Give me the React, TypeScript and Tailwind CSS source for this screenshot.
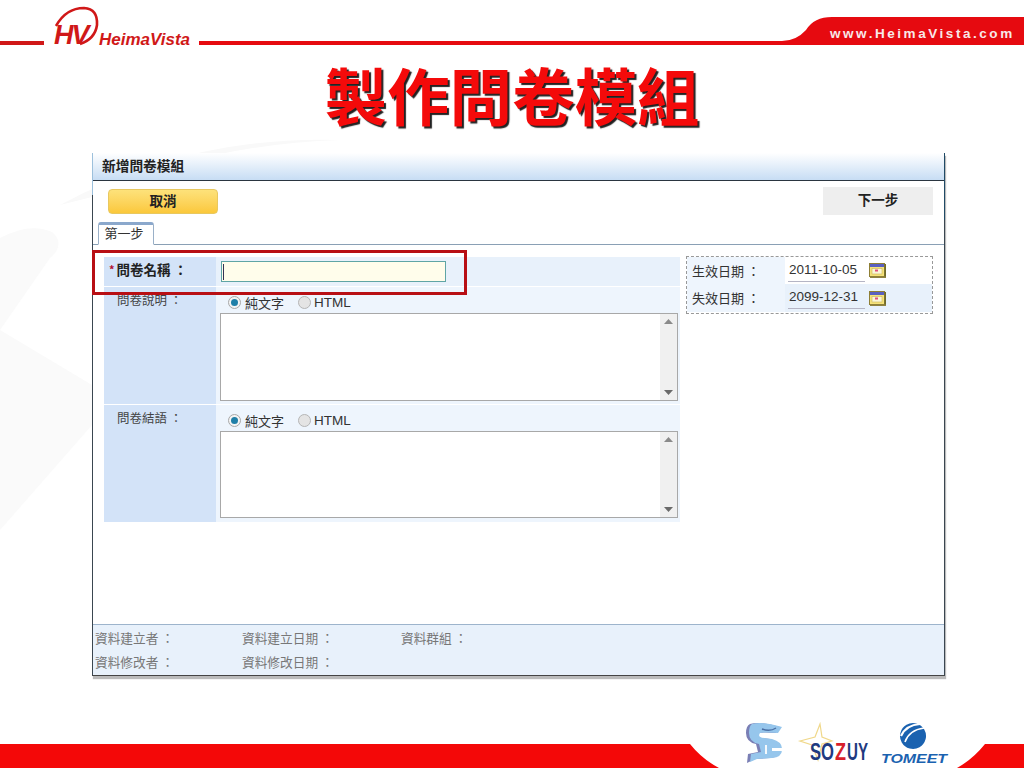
const cjk = "font-['Noto_Sans_CJK_TC','Liberation_Sans',sans-serif]";

function Radio({ on }: { on?: boolean }) {
  return (
    <span className={`flex h-[13px] w-[13px] items-center justify-center rounded-full border ${on ? "border-[#a8a8a8] bg-[#f4f4f4]" : "border-[#b5b5b5] bg-[#e4e4e4]"}`}>
      {on && <span className="h-[7px] w-[7px] rounded-full bg-[#1f7fa8]" />}
    </span>
  );
}

function RadioLine() {
  return (
    <div className="flex h-[26px] items-center pl-[12px] pt-[4px] leading-none text-[#333]">
      <Radio on />
      <span className="ml-[4px] text-[13px] leading-none">純文字</span>
      <span className="ml-[14px]"><Radio /></span>
      <span className="ml-[3px] pt-[2px] font-['Liberation_Sans',sans-serif] text-[13.5px]">HTML</span>
    </div>
  );
}

function TextBox({ h }: { h: string }) {
  return (
    <div className={`ml-[4px] flex w-[458px] border border-[#a8a8a8] bg-white ${h}`}>
      <div className="flex-1" />
      <div className="flex w-[17px] flex-col items-center justify-between bg-[#f0f0f0] py-[5px]">
        <svg width="9" height="5" viewBox="0 0 9 5"><path d="M0 5 L4.5 0 L9 5Z" fill="#8a8a8a" /></svg>
        <svg width="9" height="5" viewBox="0 0 9 5"><path d="M0 0 L4.5 5 L9 0Z" fill="#6a6a6a" /></svg>
      </div>
    </div>
  );
}

function CalendarIcon() {
  return (
    <svg width="17" height="15" viewBox="0 0 17 15" className="ml-[4px]">
      <rect x="0.5" y="0.5" width="15" height="13" fill="#f5e27a" stroke="#8f7f35" />
      <rect x="1" y="1" width="14" height="3" fill="#5a5fc0" />
      <rect x="3" y="5.5" width="10" height="5.5" fill="#fbf6d8" stroke="#c9b45a" strokeWidth="0.6" />
      <rect x="6" y="6.5" width="3" height="2" fill="#e0507a" />
      <rect x="15.5" y="1" width="1.5" height="14" fill="#6f6a2a" />
      <rect x="1" y="13.5" width="16" height="1.5" fill="#8f8240" />
    </svg>
  );
}

function DateRow({ label, value, alt }: { label: string; value: string; alt?: boolean }) {
  return (
    <div className={`flex items-center ${alt ? "h-[28px] bg-[#e8f1fb]" : "h-[27px] bg-white"}`}>
      <div className="flex h-full w-[98px] items-center bg-[#eef5fd] pl-[5px] text-[13px] text-[#333]">
        {label}
      </div>
      <div className="ml-[3px] flex h-[22px] w-[77px] items-center border-b border-[#b5b5c5] pl-[1px] font-['Liberation_Sans',sans-serif] text-[13.5px] text-[#333]">
        {value}
      </div>
      <CalendarIcon />
    </div>
  );
}

export default function App() {
  return (
    <div className={`relative flex h-[768px] w-[1024px] flex-col overflow-hidden bg-white ${cjk}`}>
      {/* faint watermark behind the slide */}
      <svg className="absolute left-0 top-0" width="1024" height="768" viewBox="0 0 1024 768">
        <path d="M60 205 Q190 135 340 140 Q200 145 100 195Z" fill="#f9f9f9" />
        <path d="M0 238 Q30 222 52 232 Q66 244 50 258 L0 330 L92 385 V425 L0 530Z" fill="#fafafa" />
      </svg>

      {/* header band */}
      <svg className="relative -mb-[6px] shrink-0" width="1024" height="52" viewBox="0 0 1024 52">
        <rect x="0" y="41" width="44" height="4" fill="#d01818" />
        <path d="M199 41 H782 Q796 41 806 30 Q814 17 832 17 H1024 V45 H199Z" fill="#e60a10" />
        <path d="M56 26 Q66 8 84 8 Q98 9 97 25 Q95 39 80 44" fill="none" stroke="#d01818" strokeWidth="2.6" />
        <text x="54" y="44" fontFamily="Liberation Sans" fontWeight="700" fontStyle="italic" fontSize="27" fill="#d01818" letterSpacing="-2">HV</text>
        <text x="99" y="44.5" fontFamily="Liberation Sans" fontWeight="700" fontStyle="italic" fontSize="17" fill="#d01818">HeimaVista</text>
        <text x="830" y="38" fontFamily="Liberation Sans" fontWeight="700" fontSize="13.5" fill="#f8e8e8" letterSpacing="2.55">www.HeimaVista.com</text>
      </svg>

      {/* title */}
      <div className="relative flex h-[107px] shrink-0 items-start justify-center pt-[11px]">
        <h1 className="text-[62.5px] font-bold leading-[74px] text-[#f40a0a] [text-shadow:2px_2px_1px_#222]">
          製作問卷模組
        </h1>
      </div>

      {/* dialog */}
      <div className="relative ml-[92px] flex h-[523px] w-[853px] shrink-0 flex-col border-x border-b border-x-[#3a4650] border-b-[#444] bg-white shadow-[1px_3px_1px_#bbb]">
        <div className="flex h-[28px] shrink-0 items-center border-b border-[#2a3540] bg-gradient-to-b from-white to-[#c7ddf4] pb-[3px] pl-[9px] text-[13.7px] font-bold text-[#222]">
          新增問卷模組
        </div>

        <div className="flex h-[41px] shrink-0 items-start justify-between pl-[15px] pr-[11px] pt-[6px]">
          <button className="mt-[2px] h-[25px] w-[110px] rounded-[4px] border border-[#e8c860] bg-gradient-to-b from-[#fde27a] to-[#fbc83a] pb-[3px] text-[13.5px] font-bold text-[#222]">
            取消
          </button>
          <button className="h-[28px] w-[110px] bg-[#eeeeee] pb-[3px] text-[13.5px] font-bold text-[#222]">下一步</button>
        </div>

        <div className="flex h-[23px] shrink-0 border-b border-[#8aa0b5] pl-[5px]">
          <div className="flex h-[23px] w-[56px] items-center justify-center rounded-t-[3px] border-x border-b border-t-[3px] border-x-[#9ab0c8] border-b-white border-t-[#8ba8cc] bg-white pb-[3px] pr-[4px] text-[13px] text-[#333]">
            第一步
          </div>
        </div>

        <div className="flex flex-1 gap-[6px] pl-[11px] pr-[11px] pt-[12px]">
          <div className="flex w-[576px] shrink-0 flex-col gap-[1px]">
            <div className="flex h-[29px]">
              <div className="flex w-[112px] items-center bg-[#d3e3f8] pb-[4px] pl-[5px] text-[13.5px] font-bold text-[#222]">
                <span className="mr-[2px] text-[11px] text-[#b01030]">*</span>
                問卷名稱 ：
              </div>
              <div className="flex flex-1 items-center bg-[#e8f1fb] pl-[5px]">
                <div className="flex h-[21px] w-[225px] items-center border border-[#5fa5a5] bg-[#fffdeb] pl-[1px]">
                  <span className="h-[16px] w-[1px] bg-[#335]" />
                </div>
              </div>
            </div>
            {[0, 1].map((i) => (
              <div key={i} className="flex h-[117px]">
                <div className="w-[112px] bg-[#d3e3f8] pl-[13px] pt-[4px] text-[12.5px] text-[#444]">
                  {i === 0 ? "問卷說明 ：" : "問卷結語 ："}
                </div>
                <div className="flex-1 bg-[#eef5fd]">
                  <RadioLine />
                  <TextBox h={i === 0 ? "h-[88px]" : "h-[87px]"} />
                </div>
              </div>
            ))}
          </div>

          <div className="-mt-[1px] h-[58px] w-[248px] self-start border border-dashed border-[#999] bg-white">
            <DateRow label="生效日期 ：" value="2011-10-05" />
            <DateRow label="失效日期 ：" value="2099-12-31" alt />
          </div>
        </div>

        <div className="flex h-[51px] shrink-0 flex-col justify-center gap-[5px] border-t border-[#9db4cc] bg-[#e8f1fb] pb-[2px] pl-[2px] text-[12.7px] leading-[19px] text-[#777]">
          <div className="flex">
            <span className="w-[147px]">資料建立者 ：</span>
            <span className="w-[159px]">資料建立日期 ：</span>
            <span>資料群組 ：</span>
          </div>
          <div className="flex">
            <span className="w-[147px]">資料修改者 ：</span>
            <span>資料修改日期 ：</span>
          </div>
        </div>

        {/* edge tints of the window behind, and the red highlight */}
        <div className="absolute -left-[1px] top-0 h-[42px] w-[1px] bg-[#9cc0dc]" />
        <div className="absolute -right-[1px] top-0 h-[67px] w-[1px] bg-[#1f4a66]" />
        <div className="absolute -left-[1px] top-[97px] h-[45px] w-[375px] border-[3px] border-[#b80f14]" />
      </div>

      {/* footer band with partner logos */}
      <svg className="mt-auto shrink-0" width="1024" height="46" viewBox="0 0 1024 46">
        <path d="M0 22 H690 Q702 37 719 46 H0Z" fill="#f40808" />
        <path d="M985 22 H1024 V46 H957 Q973 37 985 22Z" fill="#f40808" />
        <path d="M750 2 Q760 -1 780 5 L776 11 Q764 10 758 11 Q755 15 762 16 L770 17 Q781 20 780 28 Q780 35 770 36 L755 37 L747 41 L748 32 L758 30 L756 22 Q746 20 746 11 Q746 4 750 2Z" fill="#7a7fb5" />
        <path d="M752 2 Q762 -1 782 5 L778 11 Q766 10 760 11 Q757 15 764 16 L772 17 Q783 20 782 28 Q782 35 772 36 L757 37 L750 40 L751 32 L761 30 L759 22 Q749 20 749 11 Q749 4 752 2Z" fill="#96c6ec" />
        <path d="M762 7 Q770 10 776 6" fill="none" stroke="#4a6fa5" strokeWidth="1.4" />
        <rect x="772" y="26" width="11" height="3" fill="#fff" />
        <path d="M766 23 V32" stroke="#f4f8fc" strokeWidth="2" />
        <path d="M820 2 L822 15 L832 19 L822 22 L818 38 L812 23 L800 19 L815 15Z" fill="none" stroke="#f0d88a" strokeWidth="1.2" />
        <text x="810" y="38" fontFamily="Liberation Sans" fontWeight="700" fontSize="23" fill="#1f3a80" textLength="24" lengthAdjust="spacingAndGlyphs">SO</text>
        <text x="835" y="38" fontFamily="Liberation Sans" fontWeight="700" fontSize="23" fill="#d8202a" textLength="11" lengthAdjust="spacingAndGlyphs">Z</text>
        <text x="847" y="38" fontFamily="Liberation Sans" fontWeight="700" fontSize="23" fill="#1f3a80" textLength="21" lengthAdjust="spacingAndGlyphs">UY</text>
        <ellipse cx="913" cy="14" rx="13" ry="13" fill="#1a62b0" transform="rotate(15 913 14)" />
        <path d="M901 14 Q906 3 920 2" fill="none" stroke="#fff" strokeWidth="2.2" />
        <path d="M905 20 Q909 8 924 6" fill="none" stroke="#fff" strokeWidth="1.6" />
        <text x="881" y="41" fontFamily="Liberation Sans" fontWeight="700" fontStyle="italic" fontSize="12" fill="#1a62b0" textLength="66" lengthAdjust="spacingAndGlyphs">TOMEET</text>
      </svg>
    </div>
  );
}
